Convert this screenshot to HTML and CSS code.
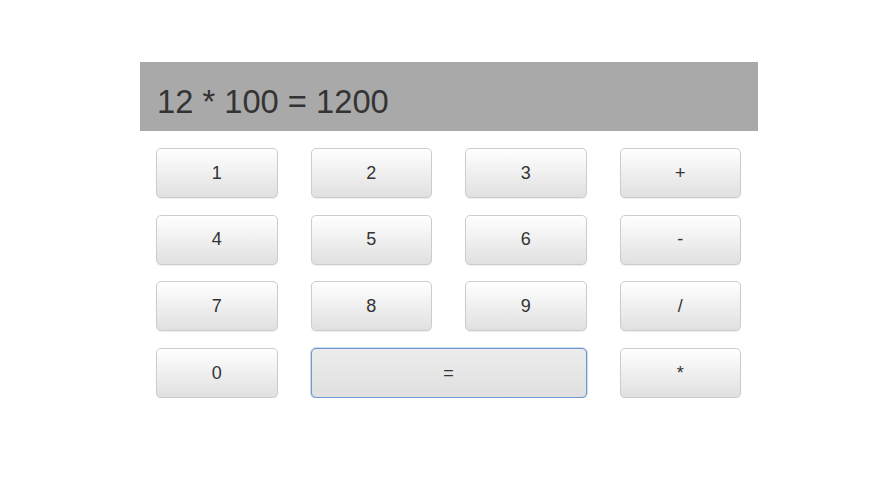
FILE: index.html
```html
<!DOCTYPE html>
<html>
<head>
<meta charset="utf-8">
<link rel="stylesheet" href="styles.css">
</head>
<body>
<div class="calc">
  <div class="display">12 * 100 = 1200</div>
  <div class="keys">
    <button class="btn">1</button>
    <button class="btn">2</button>
    <button class="btn">3</button>
    <button class="btn">+</button>
    <button class="btn">4</button>
    <button class="btn">5</button>
    <button class="btn">6</button>
    <button class="btn">-</button>
    <button class="btn">7</button>
    <button class="btn">8</button>
    <button class="btn">9</button>
    <button class="btn">/</button>
    <button class="btn">0</button>
    <button class="btn btn-wide btn-focus">=</button>
    <button class="btn">*</button>
  </div>
</div>
</body>
</html>
```
FILE: styles.css
```css
html, body {
  margin: 0;
  padding: 0;
  background: #fff;
  font-family: "Liberation Sans", Arial, sans-serif;
  color: #333;
}
.calc {
  width: 618px;
  margin: 62px 0 0 140px;
}
.display {
  height: 69px;
  background: #a9a9a9;
  font-size: 32.7px;
  line-height: 80px;
  padding-left: 17px;
  box-sizing: border-box;
  color: #333;
}
.keys {
  display: grid;
  grid-template-columns: repeat(4, 1fr);
  column-gap: 33px;
  row-gap: 16.7px;
  padding: 17px 17px 0 16px;
}
.btn {
  height: 50px;
  font-family: "Liberation Sans", Arial, sans-serif;
  font-size: 18px;
  color: #333;
  border: 1px solid #ccc;
  border-radius: 5px;
  background: linear-gradient(to bottom, #fff 0%, #e0e0e0 100%);
  box-shadow: inset 0 1px 0 rgba(255,255,255,.15), 0 1px 1px rgba(0,0,0,.075);
  padding: 0;
  margin: 0;
}
.btn-wide {
  grid-column: span 2;
}
.btn-focus {
  background: linear-gradient(to bottom, #ececec 0%, #e0e0e0 100%);
  border-color: #bbb;
  outline: 1px solid #6f98cf;
  outline-offset: -1px;
  box-shadow: 0 0 0 1px rgba(111,152,207,.35);
}
```
